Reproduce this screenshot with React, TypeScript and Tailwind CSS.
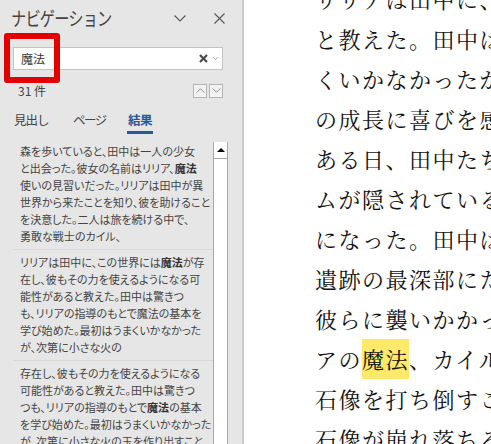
import React from "react";

const uiFont = {
    fontFamily: '"Meiryo UI", "Noto Sans CJK JP", sans-serif',
};

type Seg = { t: string; b?: boolean };

const results: Seg[][][] = [
    [
        [{ t: "森を歩いていると、田中は一人の少女" }],
        [{ t: "と出会った。彼女の名前はリリア、" }, { t: "魔法", b: true }],
        [{ t: "使いの見習いだった。リリアは田中が異" }],
        [{ t: "世界から来たことを知り、彼を助けること" }],
        [{ t: "を決意した。二人は旅を続ける中で、" }],
        [{ t: "勇敢な戦士のカイル、" }],
    ],
    [
        [{ t: "リリアは田中に、この世界には" }, { t: "魔法", b: true }, { t: "が存" }],
        [{ t: "在し、彼もその力を使えるようになる可" }],
        [{ t: "能性があると教えた。田中は驚きつ" }],
        [{ t: "も、リリアの指導のもとで魔法の基本を" }],
        [{ t: "学び始めた。最初はうまくいかなかった" }],
        [{ t: "が、次第に小さな火の" }],
    ],
    [
        [{ t: "存在し、彼もその力を使えるようになる" }],
        [{ t: "可能性があると教えた。田中は驚きつ" }],
        [{ t: "つも、リリアの指導のもとで" }, { t: "魔法", b: true }, { t: "の基本" }],
        [{ t: "を学び始めた。最初はうまくいかなかった" }],
        [{ t: "が、次第に小さな火の玉を作り出すこと" }],
    ],
];

const docLines = [
    "リリアは田中に、この",
    "と教えた。田中は驚き",
    "くいかなかったが、次",
    "の成長に喜びを感じて",
    "ある日、田中たちは古",
    "ムが隠されているとい",
    "になった。田中は仲間",
    "遺跡の最深部にたどり",
    "彼らに襲いかかってき",
    "アの|魔法|、カイルの剣",
    "石像を打ち倒すことに",
    "石像が崩れ落ちると、",
];

function ChevronDown({ className }: { className?: string }) {
    return (
        <svg className={className} viewBox="0 0 12 7" fill="none" stroke="currentColor" strokeWidth="1.1">
            <polyline points="0.5,0.5 6,6 11.5,0.5" />
        </svg>
    );
}

export default function App() {
    return (
        <div className="flex h-[444px] w-[491px] overflow-hidden bg-white">
            {/* Navigation pane */}
            <div className="relative w-[242px] shrink-0 bg-[#e6e6e6] text-[#444]" style={uiFont}>
                {/* Title */}
                <div className="flex h-[36px] items-center pl-[11px] pr-[17px]">
                    <div className="flex-1">
                        <span className="inline-block origin-left scale-x-[0.8] whitespace-nowrap text-[19px] leading-[24px] tracking-[-1px] text-[#444]">
                            ナビゲーション
                        </span>
                    </div>
                    <ChevronDown className="mr-[28px] h-[7px] w-[12px] text-[#555]" />
                    <svg className="h-[11px] w-[11px] text-[#555]" viewBox="0 0 11 11" stroke="currentColor" strokeWidth="1.1">
                        <line x1="0.5" y1="0.5" x2="10.5" y2="10.5" />
                        <line x1="10.5" y1="0.5" x2="0.5" y2="10.5" />
                    </svg>
                </div>

                {/* Search box */}
                <div className="ml-[13px] mt-[11px] flex h-[23px] w-[210px] items-center border border-[#c3c3c3] bg-white pl-[7px] pr-[4px]">
                    <span className="flex-1 text-[12px] text-[#333]">魔法</span>
                    <svg className="mr-[5px] h-[9px] w-[9px] text-[#4a4a4a]" viewBox="0 0 9 9" stroke="currentColor" strokeWidth="2.2">
                        <line x1="1" y1="1" x2="8" y2="8" />
                        <line x1="8" y1="1" x2="1" y2="8" />
                    </svg>
                    <ChevronDown className="h-[3px] w-[5px] text-[#444]" />
                </div>

                {/* Highlight frame */}
                <div className="absolute left-[4px] top-[33px] h-[50px] w-[56px] rounded-[3px] border-[6px] border-[#e30000]" />

                {/* Count */}
                <div className="mt-[13px] flex h-[15px] items-center justify-between pl-[18px] pr-[19px]">
                    <span className="text-[12px]">31 件</span>
                    <div className="flex gap-[2px]">
                        <div className="flex h-[14px] w-[14px] items-center justify-center border border-[#b5b5b5] bg-[#f2f2f2]">
                            <ChevronDown className="h-[5px] w-[9px] rotate-180 text-[#777]" />
                        </div>
                        <div className="flex h-[14px] w-[14px] items-center justify-center border border-[#b5b5b5] bg-[#f2f2f2]">
                            <ChevronDown className="h-[5px] w-[9px] text-[#777]" />
                        </div>
                    </div>
                </div>

                {/* Tabs */}
                <div className="mt-[12px] flex pl-[14px] text-[12.5px] leading-[20px]">
                    <span className="w-[59px] tracking-[-1px]">見出し</span>
                    <span className="w-[55px] tracking-[-1.5px]">ページ</span>
                    <div className="flex flex-col">
                        <span className="font-bold tracking-[-0.5px] text-[#2b579a]">結果</span>
                        <div className="mt-[1px] h-[3px] w-[26px] -translate-x-[1px] bg-[#2b579a]" />
                    </div>
                </div>

                {/* Results */}
                <div className="ml-[13px] mt-[5px] flex w-[215px]">
                    <div className="w-[200px] text-[11px] leading-[17px] text-[#444] [font-feature-settings:'palt']">
                        {results.map((item, i) => (
                            <div key={i} className="border-b border-[#d8d8d8] px-[7px] py-[4px]">
                                {item.map((line, j) => (
                                    <div key={j} className="whitespace-nowrap">
                                        {line.map((s, k) =>
                                            s.b ? (
                                                <b key={k} className="font-bold text-[#333]">{s.t}</b>
                                            ) : (
                                                <span key={k}>{s.t}</span>
                                            )
                                        )}
                                    </div>
                                ))}
                            </div>
                        ))}
                    </div>
                    <div className="mt-[3px] flex h-[320px] w-[15px] flex-col border-x border-[#a8a8a8] bg-white">
                        <div className="flex h-[17px] items-center justify-center border-b border-[#a8a8a8]">
                            <div className="h-0 w-0 border-x-[4px] border-b-[4px] border-x-transparent border-b-black" />
                        </div>
                    </div>
                </div>
            </div>

            {/* Document */}
            <div className="flex-1 overflow-hidden border-l-2 border-[#cbcbcb] bg-white">
                <div
                    className="-mt-[21px] pl-[71px] text-[22px] leading-[40px] tracking-[1.5px] text-[#111] whitespace-nowrap"
                    style={{ fontFamily: '"Noto Serif CJK JP", "Noto Sans CJK JP", serif' }}
                >
                    {docLines.map((l, i) => (
                        <div key={i}>
                            {l.split("|").map((p, k) =>
                                k === 1 ? (
                                    <span key={k} className="inline-block bg-[#ffe96b]">{p}</span>
                                ) : (
                                    <span key={k}>{p}</span>
                                )
                            )}
                        </div>
                    ))}
                </div>
            </div>
        </div>
    );
}
